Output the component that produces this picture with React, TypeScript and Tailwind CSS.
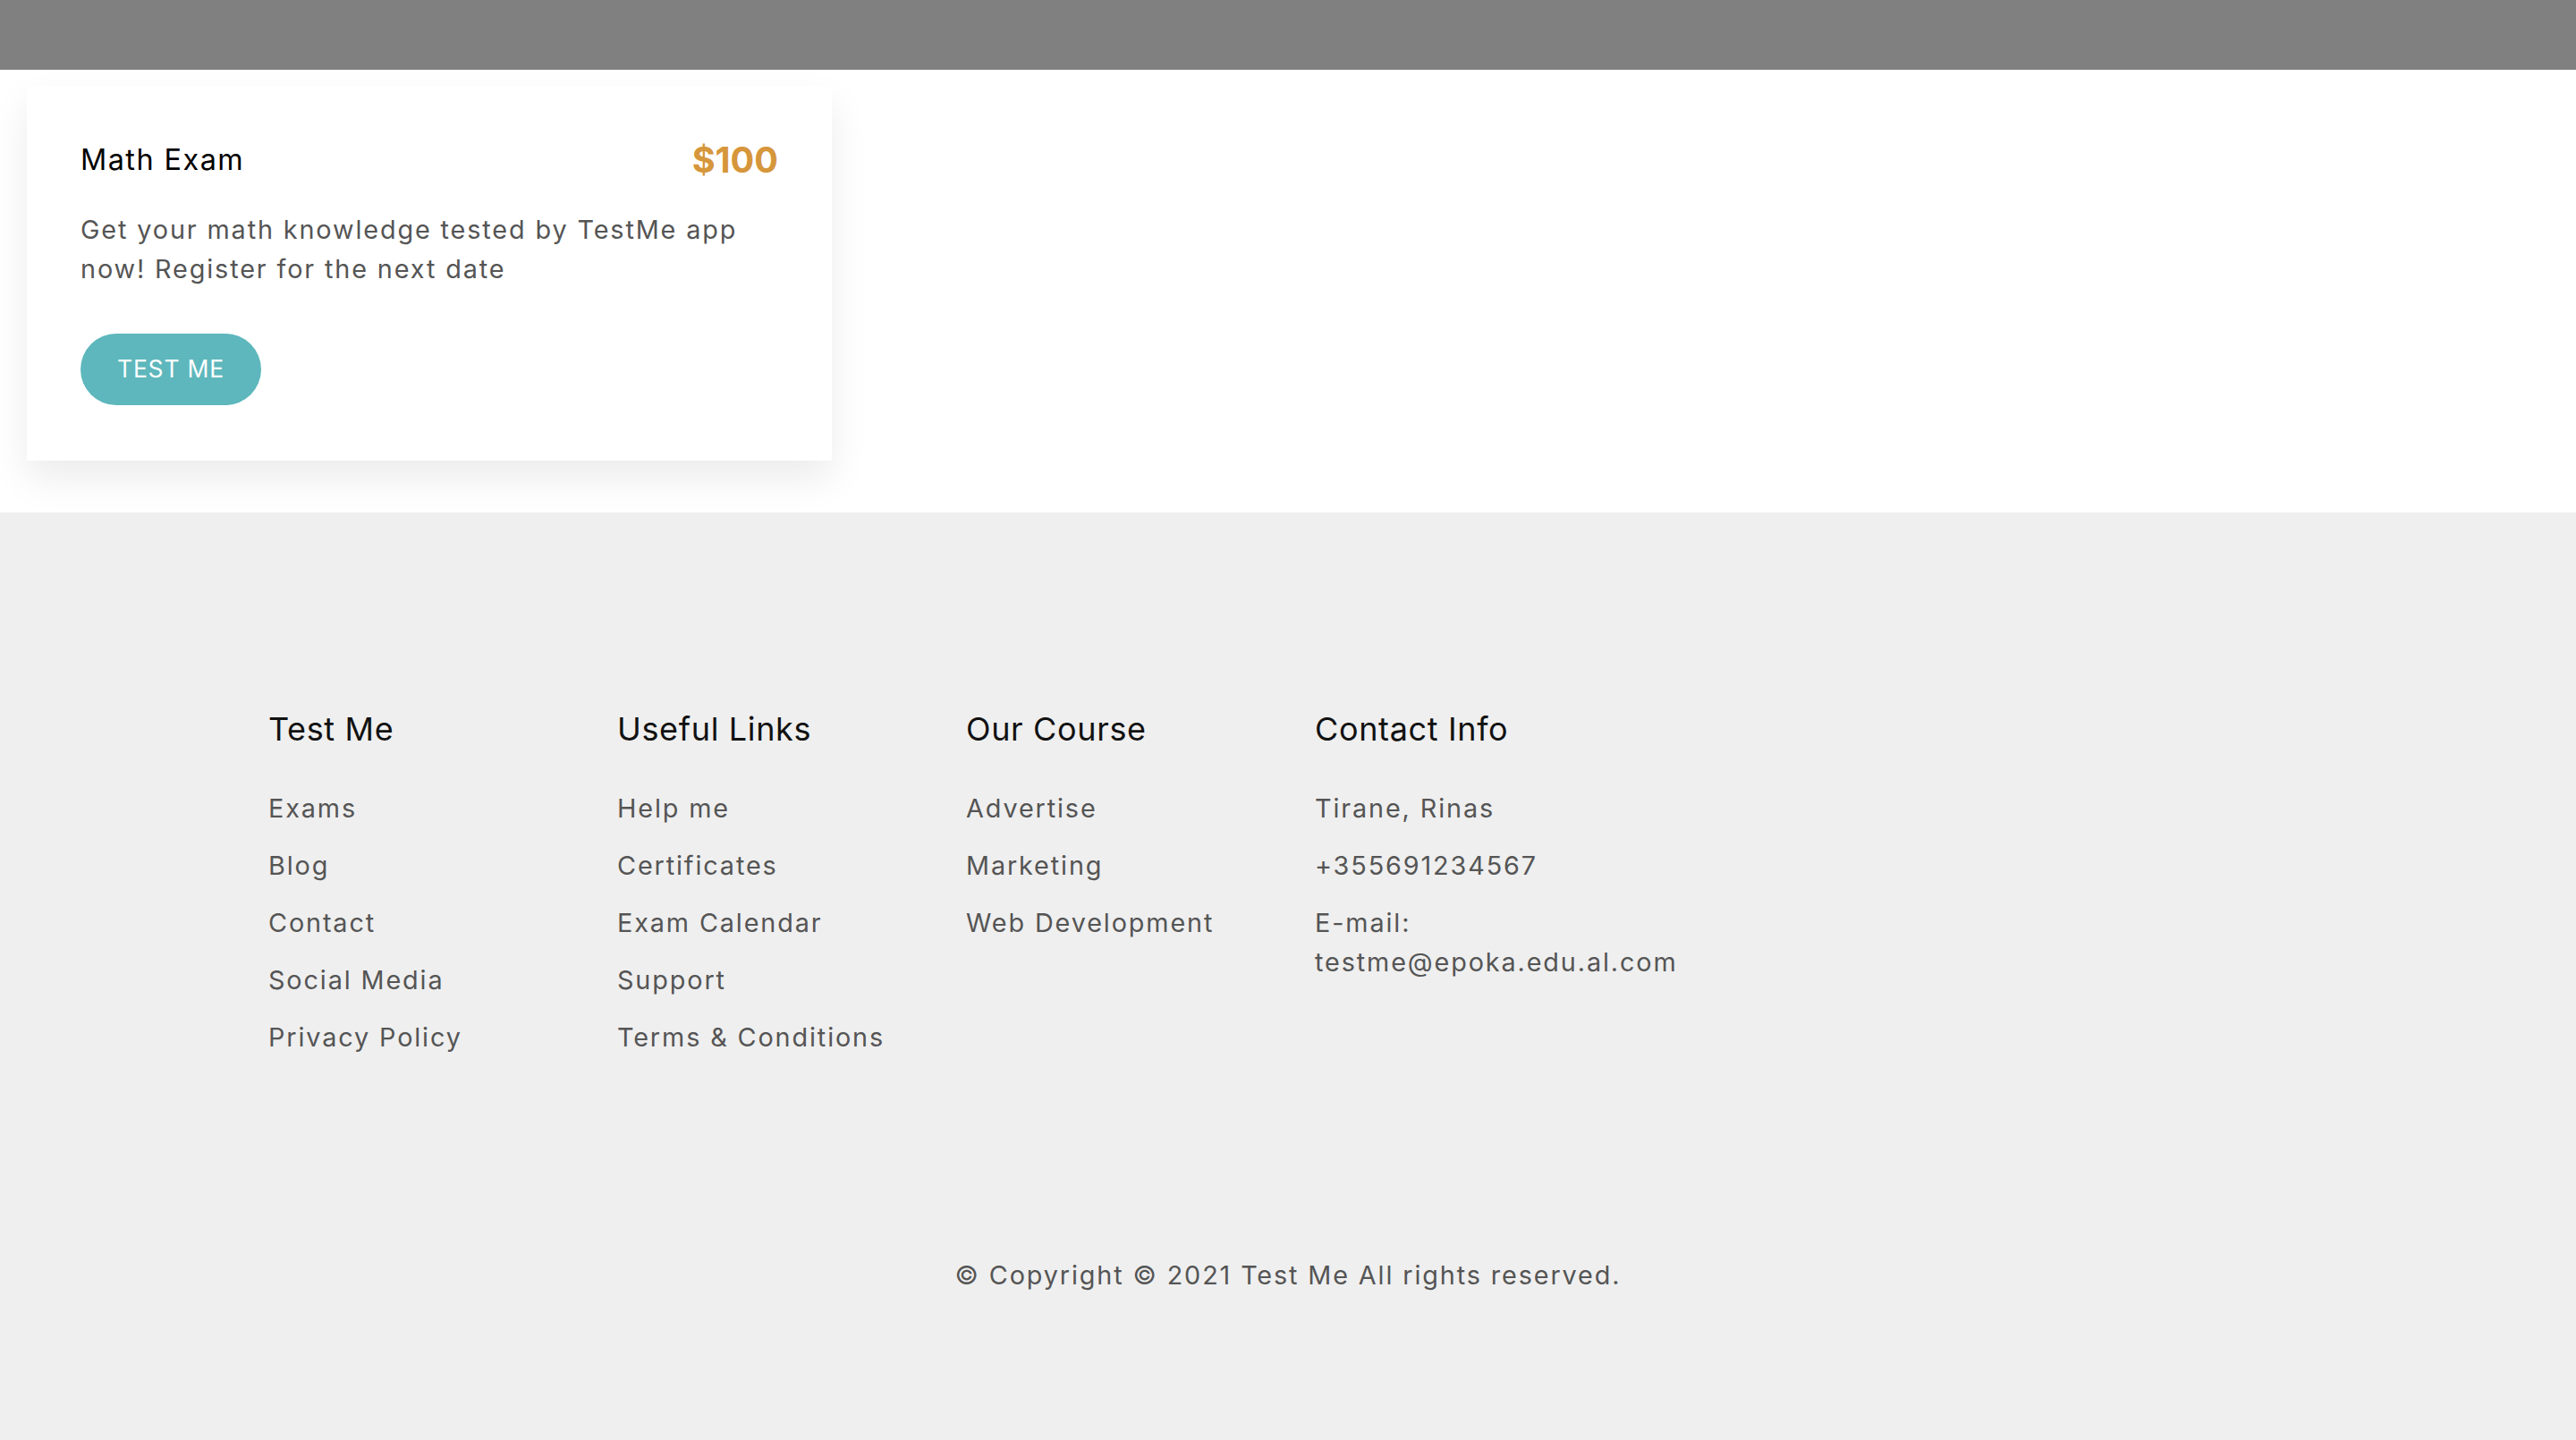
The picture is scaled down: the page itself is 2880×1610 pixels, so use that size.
const columns = [
  { title: 'Test Me', items: ['Exams', 'Blog', 'Contact', 'Social Media', 'Privacy Policy'] },
  { title: 'Useful Links', items: ['Help me', 'Certificates', 'Exam Calendar', 'Support', 'Terms & Conditions'] },
  { title: 'Our Course', items: ['Advertise', 'Marketing', 'Web Development'] },
  { title: 'Contact Info', items: ['Tirane, Rinas', '+355691234567', 'E-mail: testme@epoka.edu.al.com'] },
];

function ExamCard() {
  return (
    <div className="w-[900px] bg-white px-[60px] pt-[60px] pb-[62px] shadow-[0_20px_40px_rgba(0,0,0,0.08)]">
      <div className="flex items-center justify-between">
        <h3 className="text-[32.4px] leading-[1.2] tracking-[0.045em] text-black">Math Exam</h3>
        <span className="text-[39.6px] leading-[1.2] font-bold text-[#d6963b]">$100</span>
      </div>
      <p className="mt-[31px] text-[28.8px] leading-[44px] tracking-[0.065em] text-[#555]">
        Get your math knowledge tested by TestMe app now! Register for the next date
      </p>
      <button className="mt-[50px] h-[80px] rounded-full bg-[#5db7bc] px-[41px] text-[26.5px] tracking-[0.03em] text-white">
        TEST ME
      </button>
    </div>
  );
}

export default function App() {
  return (
    <div className="min-h-screen bg-white font-['Inter',sans-serif]">
      <div className="h-[78px] bg-[#808080]" />

      <main className="px-[30px] pt-[18px] pb-[58px]">
        <ExamCard />
      </main>

      <footer className="bg-[#efefef] pt-[221px] pb-[170px]">
        <div className="flex pl-[300px]">
          {columns.map((col) => (
            <div key={col.title} className="w-[390px]">
              <h4 className="text-[36px] leading-[1.2] tracking-[0.018em] text-[#111]">{col.title}</h4>
              <ul className="mt-[45px] flex flex-col gap-[20px]">
                {col.items.map((item) => (
                  <li key={item} className="max-w-[440px] text-[28.8px] leading-[44px] tracking-[0.065em] text-[#555]">
                    {item}
                  </li>
                ))}
              </ul>
            </div>
          ))}
        </div>
        <p className="mt-[222px] text-center text-[28.8px] leading-[44px] tracking-[0.065em] text-[#555]">
          © Copyright © 2021 Test Me All rights reserved.
        </p>
      </footer>
    </div>
  );
}
